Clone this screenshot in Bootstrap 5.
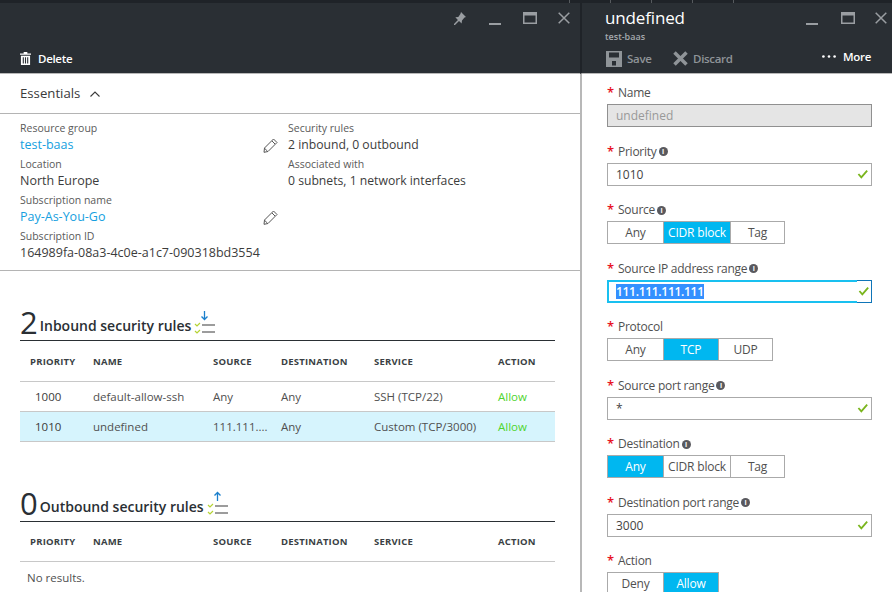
<!DOCTYPE html>
<html lang="en">
<head>
<meta charset="utf-8">
<title>Security rule</title>
<link href="https://cdn.jsdelivr.net/npm/bootstrap@5.3.0/dist/css/bootstrap.min.css" rel="stylesheet">
<style>
html,body{height:592px;overflow:hidden}
body{font-family:"Open Sans","Noto Sans",sans-serif;font-size:12px;color:#3c3c3c;background:#fff}
.shell{width:892px;height:592px}
.topstrip{height:3px;background:#1f2328;display:flex}
.tick-a{width:570px;border-right:1px solid #565a5e}
.tick-b{width:41px;border-right:1px solid #565a5e}
.blades{height:589px}
.blade-a{width:580px;flex:none;overflow:hidden}
.blade-b{flex:1;overflow:hidden;position:relative;box-shadow:inset 2px 0 0 #b8b8b8;padding-left:2px}
.hdr{height:71px;background:#2a2f34;color:#fff;position:relative;border-bottom:1px solid #b8b8b8}
.blade-b .hdr{margin-left:-2px;padding-left:2px;border-left:2px solid #1f2328}
.winbtns{position:absolute;top:9px;display:flex;align-items:center}
.winbtns svg{display:block}
.cmd{position:absolute;display:flex;align-items:center;gap:7px;font-size:11.5px;font-weight:600;letter-spacing:-.3px}
.cmd.dim{color:#8f9498;gap:5px}
.ess{height:40px;padding:1px 0 0 20px;border-bottom:1px solid #b4b4b4;font-size:13.2px;color:#3a3a3a;gap:10px}
.facts{height:157px;border-bottom:1px solid #b4b4b4;padding:7px 20px 0}
.f-col1{width:239px;white-space:nowrap}
.f-lab{font-size:10.5px;line-height:14px;color:#5a5a5a}
.f-val{font-size:12.5px;line-height:17px;padding-top:1px;color:#3c3c3c;margin-bottom:4px;white-space:nowrap}
.f-col2 .f-val{font-size:12.2px}
.f-val a{color:#15a0e0;text-decoration:none}
.pens{width:29px;padding:17px 0 0 4px;gap:57px}
.pens svg{flex:none}
.sect{padding:34px 25px 0 20px}
.s-head{display:flex;align-items:flex-end;border-bottom:1px solid #2a2f34;height:36px}
.s-num{font-size:31px;line-height:36px;color:#2a2f34;font-weight:500;margin-right:2px}
.s-title{font-size:14px;font-weight:600;color:#2a2f34;line-height:21px;margin-bottom:4px;margin-right:3px}
.rtable{table-layout:fixed;width:535px;margin:0;font-size:11.5px;--bs-table-bg:transparent}
.rtable th{font-size:9.5px;font-weight:700;color:#3a3f44;letter-spacing:.2px;height:40px;vertical-align:middle;padding:2px 0 0 10px;border-bottom:1px solid #c8c8c8}
.rtable td{height:30px;vertical-align:middle;padding:2px 0 0 10px;color:#505050;border-bottom:1px solid #c8c8c8;white-space:nowrap;overflow:hidden}
.rtable td.pr{padding-left:15px;color:#3a3a3a}
.rtable td.none{border:0;padding-left:7px}
.rtable tr.sel td{background:#d6f4fd}
.rtable td.allow{color:#4fd42e}
.gap-a{height:44px}
.form-wrap{padding:11px 20px 0 25px}
.lbl{font-size:12px;letter-spacing:-.25px;line-height:16px;height:16px;color:#505050;display:flex;align-items:center;margin-bottom:3px}
.star{color:#e81123;font-size:13px;width:11px;flex:none;position:relative;top:-1px;font-weight:600}
.info{display:inline-flex;width:9px;height:9px;border-radius:50%;background:#59595e;color:#fff;font-size:7px;font-weight:700;align-items:center;justify-content:center;margin-left:2px;line-height:1;letter-spacing:0}
.inp{height:23px;border:1px solid #aaa;width:265px;font-size:12px;line-height:21px;padding-left:8px;color:#444;display:flex;align-items:center;justify-content:space-between;padding-right:0}
.inp svg{margin-right:2px}
.inp.off{background:#e5e5e5;border-color:#909090;color:#999}
.inp.foc{border:0;height:23px;padding:0;background:#19c0f0}
.foc-in{height:19px;flex:1;margin:2px 0 2px 2px;background:#fff;display:flex;align-items:center;padding-left:7px;letter-spacing:-.3px}
.foc-tick{width:15px;height:23px;background:#fff;border:1px solid #0f75b8;border-left:0;display:flex;align-items:center;justify-content:center}
.foc-tick svg{margin:0}
.hl{background:#3390ff;color:#fff;line-height:15px;font-weight:600}
.seg{display:flex;width:max-content;height:23px;border:1px solid #aaa;font-size:12px;letter-spacing:-.2px;color:#505050}
.seg span{display:flex;align-items:center;justify-content:center;border-left:1px solid #aaa}
.seg span:first-child{border-left:0}
.seg .on{background:#00b7f0;color:#fff}
.gap1{height:16.5px}
</style>
</head>
<body>
<div class="shell">
<div class="topstrip"><span class="tick-a"></span><span class="tick-b"></span><span class="tick-b"></span><span class="tick-b"></span><span class="tick-b"></span></div>
<div class="blades d-flex">
  <div class="blade-a">
    <div class="hdr">
      <div class="winbtns" style="left:452px;top:8px">
        <svg width="16" height="16" viewBox="0 0 16 16"><path d="M9 1l5 5-1.500.6-2.500 3-.4 3-2.600-2.600L3 14l-1 0 0-1 3.900-4.100L3.300 6.300l3-.4 2.100-2.900z" fill="#9a9ea2"/></svg>
      </div>
      <div class="winbtns" style="left:489px"><svg width="13" height="16" viewBox="0 0 13 16"><rect y="11" width="12" height="2" fill="#9a9ea2"/></svg></div>
      <div class="winbtns" style="left:523px"><svg width="14" height="12" viewBox="0 0 14 12"><path d="M0 0h14v12H0zM1.500 3.500v7h11v-7z" fill="#9a9ea2" fill-rule="evenodd"/></svg></div>
      <div class="winbtns" style="left:558px"><svg width="12" height="12" viewBox="0 0 12 12"><path d="M.7.7l10.600 10.600M11.300.7L.7 11.300" stroke="#9a9ea2" stroke-width="1.500" fill="none"/></svg></div>
      <div class="cmd" style="left:20px;top:47px">
        <svg width="11" height="13" viewBox="0 0 12 14"><path d="M4 0h4v1.500h4V3H0V1.500h4zM1 4h10v10H1zM3 5.500v7h1.200v-7zM5.400 5.500v7h1.200v-7zM7.800 5.500v7H9v-7z" fill="#fff" fill-rule="evenodd"/></svg>
        <span>Delete</span>
      </div>
    </div>
    <div class="ess d-flex align-items-center">
      <span>Essentials</span>
      <svg width="10" height="6" viewBox="0 0 10 6"><path d="M.5 5.500L5 1l4.500 4.500" stroke="#3a3a3a" stroke-width="1.100" fill="none"/></svg>
    </div>
    <div class="facts d-flex">
      <div class="f-col1 flex-none">
        <div class="f-lab">Resource group</div>
        <div class="f-val"><a href="#">test-baas</a></div>
        <div class="f-lab">Location</div>
        <div class="f-val">North Europe</div>
        <div class="f-lab">Subscription name</div>
        <div class="f-val"><a href="#">Pay-As-You-Go</a></div>
        <div class="f-lab">Subscription ID</div>
        <div class="f-val">164989fa-08a3-4c0e-a1c7-090318bd3554</div>
      </div>
      <div class="pens d-flex flex-column flex-none">
        <svg width="15" height="15" viewBox="0 0 15 15"><path d="M10.500 1l3.500 3.500L5 13.500 1 14.300 1.500 10zM9 3l3 3M1.800 10.500l2.700 2.700" stroke="#555" fill="none"/></svg>
        <svg width="15" height="15" viewBox="0 0 15 15"><path d="M10.500 1l3.500 3.500L5 13.500 1 14.300 1.500 10zM9 3l3 3M1.800 10.500l2.700 2.700" stroke="#555" fill="none"/></svg>
      </div>
      <div class="f-col2">
        <div class="f-lab">Security rules</div>
        <div class="f-val">2 inbound, 0 outbound</div>
        <div class="f-lab">Associated with</div>
        <div class="f-val">0 subnets, 1 network interfaces</div>
      </div>
    </div>
    <div class="sect">
      <div class="s-head">
        <span class="s-num">2</span><span class="s-title">Inbound security rules</span>
        <svg width="24" height="26" viewBox="0 0 24 26" class="mb-1"><path d="M10.500 1v8M7.500 6.500l3 3 3-3" stroke="#1b7fcc" stroke-width="1.300" fill="none"/><path d="M1 14l2 2 3-3M1 21l2 2 3-3" stroke="#b5d334" stroke-width="1.200" fill="none"/><path d="M8 15h13M8 22h13" stroke="#9c9c9c" stroke-width="2" fill="none"/></svg>
      </div>
      <table class="table rtable">
        <colgroup><col style="width:63px"><col style="width:120px"><col style="width:68px"><col style="width:93px"><col style="width:124px"><col></colgroup>
        <thead><tr><th>PRIORITY</th><th>NAME</th><th>SOURCE</th><th>DESTINATION</th><th>SERVICE</th><th>ACTION</th></tr></thead>
        <tbody>
          <tr><td class="pr">1000</td><td>default-allow-ssh</td><td>Any</td><td>Any</td><td>SSH (TCP/22)</td><td class="allow">Allow</td></tr>
          <tr class="sel"><td class="pr">1010</td><td>undefined</td><td>111.111....</td><td>Any</td><td>Custom (TCP/3000)</td><td class="allow">Allow</td></tr>
        </tbody>
      </table>
      <div class="gap-a"></div>
      <div class="s-head">
        <span class="s-num">0</span><span class="s-title">Outbound security rules</span>
        <svg width="24" height="26" viewBox="0 0 24 26" class="mb-1"><path d="M10.500 10V2M7.500 4.500l3-3 3 3" stroke="#1b7fcc" stroke-width="1.300" fill="none"/><path d="M1 14l2 2 3-3M1 21l2 2 3-3" stroke="#b5d334" stroke-width="1.200" fill="none"/><path d="M8 15h13M8 22h13" stroke="#9c9c9c" stroke-width="2" fill="none"/></svg>
      </div>
      <table class="table rtable">
        <colgroup><col style="width:63px"><col style="width:120px"><col style="width:68px"><col style="width:93px"><col style="width:124px"><col></colgroup>
        <thead><tr><th>PRIORITY</th><th>NAME</th><th>SOURCE</th><th>DESTINATION</th><th>SERVICE</th><th>ACTION</th></tr></thead>
        <tbody><tr><td colspan="6" class="none">No results.</td></tr></tbody>
      </table>
    </div>
  </div>
  <div class="blade-b">
    <div class="hdr">
      <div style="position:absolute;left:23px;top:3px;font-size:17px;letter-spacing:-.15px;line-height:24px">undefined</div>
      <div style="position:absolute;left:23px;top:27px;font-size:9px;line-height:13px;color:#a5aaae;font-weight:600">test-baas</div>
      <div class="winbtns" style="left:224px"><svg width="13" height="16" viewBox="0 0 13 16"><rect y="11" width="12" height="2" fill="#9a9ea2"/></svg></div>
      <div class="winbtns" style="left:259px"><svg width="14" height="12" viewBox="0 0 14 12"><path d="M0 0h14v12H0zM1.500 3.500v7h11v-7z" fill="#9a9ea2" fill-rule="evenodd"/></svg></div>
      <div class="winbtns" style="left:293px"><svg width="12" height="12" viewBox="0 0 12 12"><path d="M.7.7l10.600 10.600M11.300.7L.7 11.300" stroke="#9a9ea2" stroke-width="1.500" fill="none"/></svg></div>
      <div class="cmd dim" style="left:24px;top:47px">
        <svg width="16" height="16" viewBox="0 0 16 16"><path d="M0 0h16v16H0zM3 1.500v5h10v-5zM6 10v4.500h4V10z" fill="#8f9498" fill-rule="evenodd"/></svg>
        <span>Save</span>
      </div>
      <div class="cmd dim" style="left:91px;top:47px">
        <svg width="15" height="15" viewBox="0 0 15 15"><path d="M1.500 1.500l12 12M13.500 1.500l-12 12" stroke="#8f9498" stroke-width="3.500" fill="none"/></svg>
        <span>Discard</span>
      </div>
      <div class="cmd" style="left:240px;top:45px;gap:7px">
        <svg width="14" height="3" viewBox="0 0 15 3"><circle cx="1.500" cy="1.500" r="1.400" fill="#fff"/><circle cx="7.500" cy="1.500" r="1.400" fill="#fff"/><circle cx="13.500" cy="1.500" r="1.400" fill="#fff"/></svg>
        <span>More</span>
      </div>
    </div>
    <div class="form-wrap">
      <div class="lbl"><span class="star">*</span>Name</div>
      <div class="inp off">undefined</div>
      <div class="gap1"></div>
      <div class="lbl"><span class="star">*</span>Priority<span class="info">i</span></div>
      <div class="inp">1010<svg width="12" height="10" viewBox="0 0 14 12"><path d="M1.500 6l3.500 4 7-8" stroke="#7ab51d" stroke-width="2.200" fill="none"/></svg></div>
      <div class="gap1"></div>
      <div class="lbl"><span class="star">*</span>Source<span class="info">i</span></div>
      <div class="seg"><span style="width:55px">Any</span><span class="on" style="width:67px">CIDR block</span><span style="width:54px">Tag</span></div>
      <div class="gap1"></div>
      <div class="lbl"><span class="star">*</span>Source IP address range<span class="info">i</span></div>
      <div class="inp foc"><div class="foc-in"><span class="hl">111.111.111.111</span></div><div class="foc-tick"><svg width="12" height="10" viewBox="0 0 14 12"><path d="M1.500 6l3.500 4 7-8" stroke="#7ab51d" stroke-width="2.200" fill="none"/></svg></div></div>
      <div class="gap1"></div>
      <div class="lbl"><span class="star">*</span>Protocol</div>
      <div class="seg"><span style="width:55px">Any</span><span class="on" style="width:55px">TCP</span><span style="width:54px">UDP</span></div>
      <div class="gap1"></div>
      <div class="lbl"><span class="star">*</span>Source port range<span class="info">i</span></div>
      <div class="inp">*<svg width="12" height="10" viewBox="0 0 14 12"><path d="M1.500 6l3.500 4 7-8" stroke="#7ab51d" stroke-width="2.200" fill="none"/></svg></div>
      <div class="gap1"></div>
      <div class="lbl"><span class="star">*</span>Destination<span class="info">i</span></div>
      <div class="seg"><span class="on" style="width:55px">Any</span><span style="width:67px">CIDR block</span><span style="width:54px">Tag</span></div>
      <div class="gap1"></div>
      <div class="lbl"><span class="star">*</span>Destination port range<span class="info">i</span></div>
      <div class="inp">3000<svg width="12" height="10" viewBox="0 0 14 12"><path d="M1.500 6l3.500 4 7-8" stroke="#7ab51d" stroke-width="2.200" fill="none"/></svg></div>
      <div class="gap1"></div>
      <div class="lbl"><span class="star">*</span>Action</div>
      <div class="seg"><span style="width:55px">Deny</span><span class="on" style="width:55px">Allow</span></div>
    </div>
  </div>
</div>
</div>
<script src="https://cdn.jsdelivr.net/npm/bootstrap@5.3.0/dist/js/bootstrap.bundle.min.js"></script>
</body>
</html>
